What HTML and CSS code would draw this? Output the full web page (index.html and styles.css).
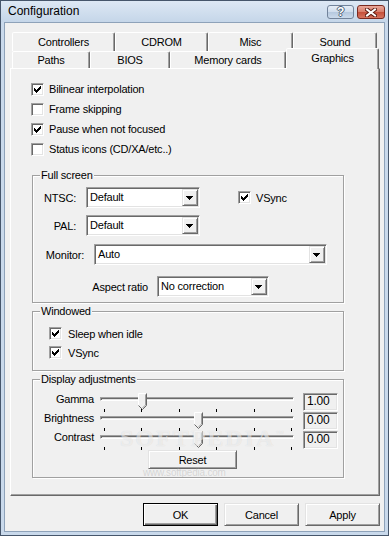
FILE: index.html
```html
<!DOCTYPE html>
<html lang="en">
<head>
	<meta charset="UTF-8">
	<title>Configuration</title>
	<link rel="stylesheet" href="styles.css">
</head>
<body>
	<div class="window">
		<div class="titlebar">
			<span class="title">Configuration</span>
			<div class="caption-buttons">
				<span class="cap-btn help">?</span>
				<span class="cap-btn close">
					<svg width="12" height="9" viewBox="0 0 12 9">
						<path d="M2 1.5L10 7.5M10 1.5L2 7.5" stroke="#5a1a10" stroke-width="4" stroke-linecap="square"/>
						<path d="M2 1.5L10 7.5M10 1.5L2 7.5" stroke="#fff" stroke-width="2" stroke-linecap="square"/>
					</svg>
				</span>
			</div>
		</div>

		<div class="client">
			<div class="tabs">
				<div class="tab-row back">
					<div class="tab w-controllers">Controllers</div>
					<div class="tab w-cdrom">CDROM</div>
					<div class="tab w-misc">Misc</div>
					<div class="tab w-sound">Sound</div>
				</div>
				<div class="tab-row front">
					<div class="tab w-paths">Paths</div>
					<div class="tab w-bios">BIOS</div>
					<div class="tab w-memory">Memory cards</div>
					<div class="tab w-graphics selected">Graphics</div>
				</div>
			</div>

			<div class="panel">
				<div class="check-row"><span class="check on"></span>Bilinear interpolation</div>
				<div class="check-row"><span class="check"></span>Frame skipping</div>
				<div class="check-row"><span class="check on"></span>Pause when not focused</div>
				<div class="check-row"><span class="check"></span>Status icons (CD/XA/etc..)</div>

				<div class="group fullscreen">
					<div class="group-title">Full screen</div>
					<div class="field-row first">
						<span class="field-label w-short">NTSC:</span>
						<div class="combo w-mode"><span class="combo-text">Default</span><span class="drop"></span></div>
						<div class="check-row inline"><span class="check on"></span>VSync</div>
					</div>
					<div class="field-row second">
						<span class="field-label w-short">PAL:</span>
						<div class="combo w-mode"><span class="combo-text">Default</span><span class="drop"></span></div>
					</div>
					<div class="field-row third">
						<span class="field-label w-monitor">Monitor:</span>
						<div class="combo w-wide"><span class="combo-text">Auto</span><span class="drop"></span></div>
					</div>
					<div class="field-row fourth">
						<span class="field-label w-aspect">Aspect ratio</span>
						<div class="combo w-aspect-box"><span class="combo-text">No correction</span><span class="drop"></span></div>
					</div>
				</div>

				<div class="group windowed">
					<div class="group-title">Windowed</div>
					<div class="sub-checks">
						<div class="check-row short"><span class="check on"></span>Sleep when idle</div>
						<div class="check-row short"><span class="check on"></span>VSync</div>
					</div>
				</div>

				<div class="group adjust">
					<div class="group-title">Display adjustments</div>
					<div class="sliders">
						<div class="slider-row">
							<span class="slider-label">Gamma</span>
							<div class="slider">
								<div class="track"></div>
								<div class="ticks"><i></i><i></i><i></i><i></i><i></i><i></i></div>
								<span class="thumb" style="left: 38px"></span>
							</div>
							<span class="value-box">1.00</span>
						</div>
						<div class="slider-row">
							<span class="slider-label">Brightness</span>
							<div class="slider">
								<div class="track"></div>
								<div class="ticks"><i></i><i></i><i></i><i></i><i></i><i></i></div>
								<span class="thumb" style="left: 94px"></span>
							</div>
							<span class="value-box">0.00</span>
						</div>
						<div class="slider-row">
							<span class="slider-label">Contrast</span>
							<div class="slider">
								<div class="track"></div>
								<div class="ticks"><i></i><i></i><i></i><i></i><i></i><i></i></div>
								<span class="thumb" style="left: 94px"></span>
							</div>
							<span class="value-box">0.00</span>
						</div>
					</div>
					<div class="btn reset">Reset</div>
				</div>
			</div>

			<div class="dialog-buttons">
				<div class="btn default">OK</div>
				<div class="btn">Cancel</div>
				<div class="btn">Apply</div>
			</div>
		</div>

		<div class="watermark">SOFTPEDIA<sup>™</sup></div>
		<div class="watermark-url">www.softpedia.com</div>
	</div>
</body>
</html>
```

FILE: styles.css
```css
* {
    box-sizing: border-box;
}

body {
    margin: 0;
    font-family: "Liberation Sans", Arial, sans-serif;
    font-size: 11px;
    letter-spacing: -0.2px;
    color: #000;
    background: #fff;
}

/* window frame */
.window {
    position: relative;
    width: 389px;
    height: 536px;
    border: 1px solid #46566b;
    background: #c9d9eb;
    display: flex;
    flex-direction: column;
}

.titlebar {
    height: 21px;
    display: flex;
    justify-content: space-between;
    background: linear-gradient(#dde8f4, #c5d6e9);
}

.title {
    font-size: 12px;
    letter-spacing: 0;
    line-height: 15px;
    padding: 3px 0 0 7px;
}

.caption-buttons {
    display: flex;
    gap: 3px;
    padding: 4px 3px 0 0;
}

.cap-btn {
    width: 27px;
    height: 14px;
    border-radius: 3px;
    display: flex;
    align-items: center;
    justify-content: center;
}

.cap-btn.help {
    border: 1px solid #72839a;
    background: linear-gradient(#e6eef7 0, #cfdcec 50%, #b5c8de 50%, #cbdaeb 100%);
    color: #fff;
    font-weight: bold;
    font-size: 12px;
    text-shadow: 1px 0 #4d5e74, -1px 0 #4d5e74, 0 1px #4d5e74, 0 -1px #4d5e74;
}

.cap-btn.close {
    width: 28px;
    border: 1px solid #7b2a20;
    background: linear-gradient(#eaa89a 0, #d77c69 50%, #c44e39 50%, #d6745f 100%);
}

.client {
    flex: 1;
    margin: 0 3px 3px 3px;
    border: 1px solid #8ea2b9;
    background: #f0f0f0;
    padding: 9px 4px 0 5px;
}

/* tabs */
.tabs {
    margin-left: 2px;
}

.tab-row {
    display: flex;
}

.tab-row.back {
    height: 19px;
}

.tab-row.front {
    height: 17px;
    align-items: flex-end;
}

.tab {
    height: 100%;
    display: flex;
    align-items: center;
    justify-content: center;
    background: #f0f0f0;
    border: 1px solid;
    border-bottom: none;
    border-color: #fff #696969 transparent #fff;
    border-radius: 2px 2px 0 0;
    box-shadow: inset -1px 0 #a0a0a0;
}

.tab.selected {
    position: relative;
    z-index: 1;
    height: 21px;
    margin-bottom: -1px;
    padding-bottom: 2px;
}

.w-controllers { width: 103px; }
.w-cdrom { width: 93px; }
.w-misc { width: 85px; }
.w-sound { width: 84px; }
.w-paths { width: 78px; }
.w-bios { width: 80px; }
.w-memory { width: 116px; }
.w-graphics { width: 93px; }

.panel {
    height: 428px;
    border: 1px solid;
    border-color: #fff #696969 #696969 #fff;
    box-shadow: inset -1px -1px #a0a0a0;
    padding: 10px 0 0 20px;
}

/* checkboxes */
.check-row {
    display: flex;
    align-items: center;
    gap: 5px;
    height: 20px;
}

.check-row.short {
    height: 19px;
    gap: 6px;
}

.check-row.inline {
    margin-left: 38px;
}

.check {
    width: 13px;
    height: 13px;
    flex: none;
    border: 1px solid;
    border-color: #a0a0a0 #fff #fff #a0a0a0;
    box-shadow: inset 1px 1px #696969, inset -1px -1px #e3e3e3;
    background: #fff;
}

.check.on {
    background: #fff url("data:image/svg+xml,%3Csvg xmlns='http://www.w3.org/2000/svg' width='7' height='7' shape-rendering='crispEdges'%3E%3Cpath d='M0 2h1v3H0zM1 3h1v3H1zM2 4h1v3H2zM3 3h1v3H3zM4 2h1v3H4zM5 1h1v3H5zM6 0h1v3H6z'/%3E%3C/svg%3E") no-repeat 2px 2px;
}

/* group boxes */
.group {
    width: 312px;
    margin: 16px 0 0 1px;
    border: 1px solid #a0a0a0;
    box-shadow: inset 1px 1px #fff, 1px 1px #fff;
}

.group-title {
    width: fit-content;
    height: 14px;
    line-height: 14px;
    margin: -8px 0 0 7px;
    padding: 0 1px;
    background: #f0f0f0;
}

.group.fullscreen {
    padding-bottom: 5px;
}

.group.windowed,
.group.adjust {
    margin-top: 8px;
    padding-bottom: 8px;
}

.field-row {
    display: flex;
    align-items: center;
    height: 21px;
}

.field-row.first { margin-top: 5px; }
.field-row.second { margin-top: 7px; }
.field-row.third { margin-top: 8px; }
.field-row.fourth { margin-top: 11px; }

.field-label {
    text-align: right;
    margin-right: 10px;
}

.w-short { width: 43px; }
.w-monitor { width: 51px; }
.w-aspect { width: 115px; margin-right: 9px; }

.combo {
    display: flex;
    height: 21px;
    padding: 1px;
    border: 1px solid;
    border-color: #a0a0a0 #fff #fff #a0a0a0;
    box-shadow: inset 1px 1px #696969, inset -1px -1px #e3e3e3;
    background: #fff;
}

.w-mode { width: 114px; }
.w-wide { width: 233px; }
.w-aspect-box { width: 112px; }

.combo-text {
    flex: 1;
    line-height: 17px;
    padding-left: 2px;
}

.drop {
    width: 16px;
    height: 17px;
    border: 1px solid;
    border-color: #e3e3e3 #696969 #696969 #e3e3e3;
    box-shadow: inset 1px 1px #fff, inset -1px -1px #a0a0a0;
    background: #f0f0f0 url("data:image/svg+xml,%3Csvg xmlns='http://www.w3.org/2000/svg' width='7' height='4' shape-rendering='crispEdges'%3E%3Cpath d='M0 0h7v1H0zM1 1h5v1H1zM2 2h3v1H2zM3 3h1v1H3z'/%3E%3C/svg%3E") no-repeat 3px 6px;
}

.sub-checks {
    margin-top: 6px;
    padding-left: 16px;
}

/* sliders */
.sliders {
    margin-top: 7px;
}

.slider-row {
    display: flex;
    height: 19px;
}

.slider-label {
    width: 61px;
    margin-right: 6px;
    text-align: right;
    line-height: 13px;
}

.slider {
    position: relative;
    width: 194px;
    margin-right: 9px;
}

.track {
    margin-top: 4px;
    height: 4px;
    border: 1px solid;
    border-color: #a0a0a0 #fff #fff #a0a0a0;
    box-shadow: inset 1px 1px #696969;
    background: #e3e3e3;
}

.ticks {
    display: flex;
    justify-content: space-between;
    margin: 8px 2px 0 4px;
}

.ticks i {
    width: 1px;
    height: 3px;
    background: #000;
}

.thumb {
    position: absolute;
    top: 0;
    width: 9px;
    height: 17px;
    background: url("data:image/svg+xml,%3Csvg xmlns='http://www.w3.org/2000/svg' width='9' height='17'%3E%3Cpath d='M0.5 0.5H8.5V12.5L4.5 16.5L0.5 12.5Z' fill='%23f0f0f0'/%3E%3Cpath d='M0.5 12.5V0.5H8' fill='none' stroke='%23fff'/%3E%3Cpath d='M8.5 0.5V12.5L4.5 16.5L0.5 12.5' fill='none' stroke='%23696969'/%3E%3Cpath d='M7.5 1.5V12L4.5 15' fill='none' stroke='%23a0a0a0'/%3E%3C/svg%3E") no-repeat;
}

.value-box {
    width: 35px;
    height: 18px;
    line-height: 14px;
    padding-left: 3px;
    border: 1px solid;
    border-color: #a0a0a0 #fff #fff #a0a0a0;
    box-shadow: inset 1px 1px #696969, inset -1px -1px #e3e3e3;
    background: #f0f0f0;
    font-size: 12px;
}

/* buttons */
.btn {
    display: flex;
    align-items: center;
    justify-content: center;
    width: 75px;
    height: 23px;
    border: 1px solid;
    border-color: #e3e3e3 #696969 #696969 #e3e3e3;
    box-shadow: inset 1px 1px #fff, inset -1px -1px #a0a0a0;
    background: #f0f0f0;
}

.btn.default {
    border-color: #000;
    box-shadow: inset 1px 1px #fff, inset -1px -1px #696969, inset -2px -2px #a0a0a0;
}

.btn.reset {
    width: 89px;
    height: 19px;
    margin-left: 115px;
}

.dialog-buttons {
    display: flex;
    justify-content: flex-end;
    gap: 6px;
    margin-top: 7px;
}

/* watermark */
.watermark {
    position: absolute;
    left: 119px;
    top: 424px;
    font-family: "Liberation Serif", serif;
    font-weight: bold;
    font-size: 24px;
    letter-spacing: 2px;
    color: rgba(255, 255, 255, 0.55);
    text-shadow: 0 0 1px rgba(0, 0, 0, 0.12);
}

.watermark sup {
    font-size: 9px;
    font-family: "Liberation Sans", sans-serif;
}

.watermark-url {
    position: absolute;
    left: 142px;
    top: 466px;
    font-size: 10px;
    line-height: 11px;
    color: rgba(160, 160, 160, 0.35);
}
```
